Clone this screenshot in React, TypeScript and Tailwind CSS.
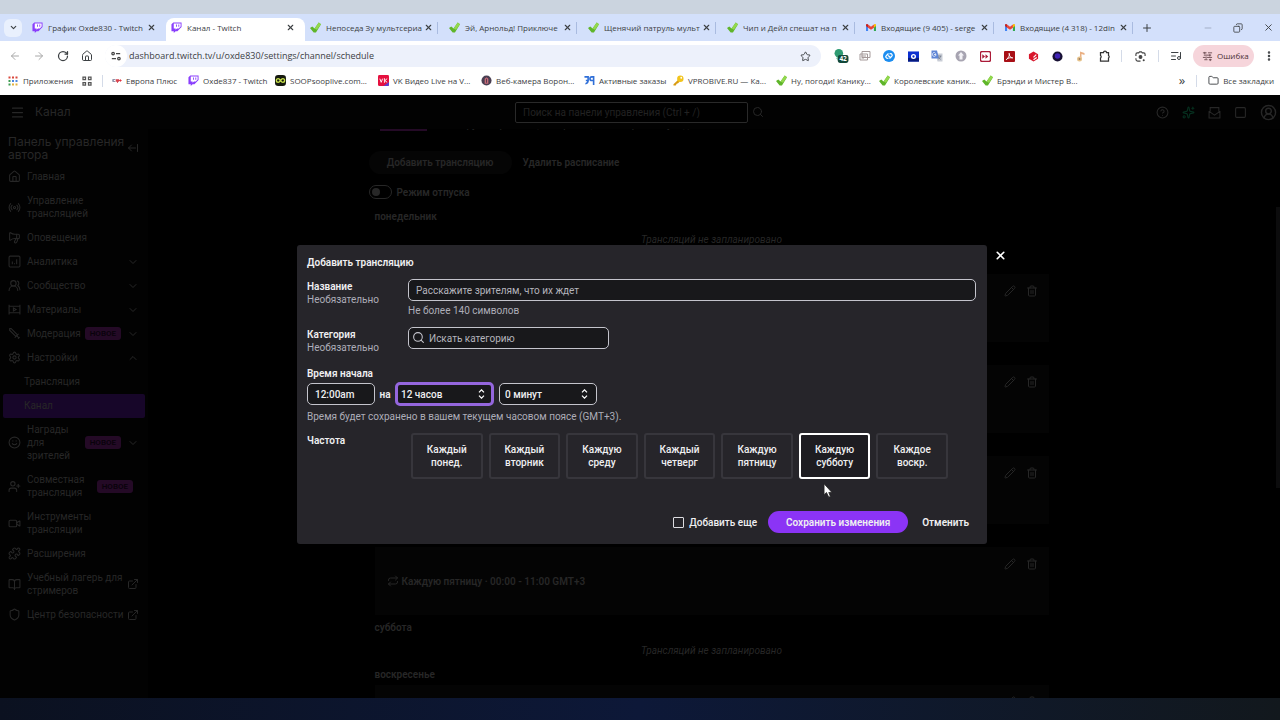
import type { ReactNode } from 'react';
import {
  ArrowLeft, ArrowLeftFromLine, ArrowRight, BookOpen, ChevronDown, ChevronUp, CircleHelp,
  CircleUserRound, Copy, EllipsisVertical, ExternalLink, Folder, House, ListMusic, Megaphone, Menu, Minus, Pencil,
  Plus, Puzzle, Radio, Repeat, RotateCw, Search, Settings, Shield, Smile, Sparkles, Square,
  Star, Sword, Trash2, UserPlus, UsersRound, Video, X,
} from 'lucide-react';

const TwitchIcon = () => (
  <svg viewBox="0 0 24 24" className="size-[11px] shrink-0">
    <path d="M5 1 1 5v15h5v4l4-4h4l9-9V1z" fill="#8a3ffc" />
    <path d="M6 3h15v7l-4 4h-4l-3 3v-3H6z" fill="#fff" />
    <path d="M11 5.5h2v5h-2zM16 5.5h2v5h-2z" fill="#8a3ffc" />
  </svg>
);

const CheckIcon = () => (
  <svg viewBox="0 0 24 24" className="size-[11px] shrink-0">
    <path d="M0 13l5-3 5 4L19 1l5 4-11 18H8z" fill="#5fb52a" />
    <path d="M10 14 19 1l5 4-9 12z" fill="#93d84e" />
  </svg>
);

const GmailIcon = () => (
  <svg viewBox="0 0 24 18" className="w-[10px] shrink-0">
    <path d="M0 2v16h5V8z" fill="#4285f4" />
    <path d="M24 2v16h-5V8z" fill="#34a853" />
    <path d="M5 1v8l7 5 7-5V1l-7 5.500z" fill="#ea4335" />
    <path d="M0 2c0-2 3-3 5-1v8L0 5z" fill="#c5221f" />
    <path d="M24 2c0-2-3-3-5-1v8l5-4z" fill="#fbbc04" />
  </svg>
);

const AppsIcon = () => (
  <svg viewBox="0 0 20 20" className="size-[10px] shrink-0">
    <path d="M1 1h4v4H1zM8 1h4v4H8zM15 1h4v4h-4z" fill="#d9493d" />
    <path d="M1 8h4v4H1zM1 15h4v4H1z" fill="#3f9d52" />
    <path d="M8 8h4v4H8zM15 8h4v4h-4z" fill="#4a86e0" />
    <path d="M8 15h4v4H8zM15 15h4v4h-4z" fill="#e3b23c" />
  </svg>
);

const GridIcon = () => (
  <svg viewBox="0 0 20 20" className="size-[10px] shrink-0" fill="none" stroke="#555" strokeWidth="2.500">
    <path d="M2 2h5v5H2zM13 2h5v5h-5zM2 13h5v5H2zM13 13h5v5h-5z" />
  </svg>
);

const EuropaIcon = () => (
  <svg viewBox="0 0 24 12" className="w-[10px] shrink-0">
    <path d="M1 3h7v2H4v2h4v2H1z" fill="#6d7391" />
    <path d="M9 3h8v6h-3v3h-2V9H9z" fill="#d5424d" />
    <path d="M17 5h2V3h2v2h2v2h-2v2h-2V7h-2z" fill="#e2333f" />
  </svg>
);

const SoopIcon = () => (
  <svg viewBox="0 0 24 24" className="size-[11px] shrink-0">
    <rect width="24" height="24" rx="7" fill="#15190f" />
    <path d="M12 12c-2-3-3-4-5-4a4 4 0 0 0 0 8c2 0 3-1 5-4s3-4 5-4a4 4 0 0 1 0 8c-2 0-3-1-5-4z" fill="none" stroke="#c6e04a" strokeWidth="3" />
  </svg>
);

const VkIcon = () => (
  <svg viewBox="0 0 24 24" className="size-[11px] shrink-0">
    <rect width="24" height="24" rx="3" fill="#e5103f" />
    <path d="M12 24h9a3 3 0 0 0 3-3v-6z" fill="#5b3fd0" />
    <path d="M4 8l3 8 3-8M14 7v10M20 8l-5 4 5 4" fill="none" stroke="#fff" strokeWidth="2" />
  </svg>
);

const CamIcon = () => (
  <svg viewBox="0 0 24 24" className="size-[11px] shrink-0">
    <circle cx="12" cy="12" r="11" fill="#493f52" />
    <path d="M8 19V8l4-3 4 3v11z" fill="#c76a78" />
    <path d="M11 8h2v9h-2z" fill="#4d3a4c" />
  </svg>
);

const OrdersIcon = () => (
  <svg viewBox="0 0 24 24" className="size-[11px] shrink-0" fill="none" stroke="#2f6fd8" strokeWidth="3.500">
    <path d="M1 4h8v8H4M9 10c0 6-1 9-6 9M21 22V4h-4a4 4 0 0 0 0 8h4" />
  </svg>
);

const KeyIcon = () => (
  <svg viewBox="0 0 24 24" className="size-[11px] shrink-0">
    <path d="M12 10 1 20v3h5l2-4 3-1 4-4z" fill="#d99b13" />
    <circle cx="16" cy="8" r="7" fill="#f2c41d" />
    <circle cx="18" cy="6" r="2" fill="#fff" />
  </svg>
);

const tabs = [
  { icon: <TwitchIcon />, title: 'График Oxde830 - Twitch' },
  { icon: <TwitchIcon />, title: 'Канал - Twitch', active: true },
  { icon: <CheckIcon />, title: 'Непоседа Зу мультсериа' },
  { icon: <CheckIcon />, title: 'Эй, Арнольд! Приключе' },
  { icon: <CheckIcon />, title: 'Щенячий патруль мульт' },
  { icon: <CheckIcon />, title: 'Чип и Дейл спешат на п' },
  { icon: <GmailIcon />, title: 'Входящие (9 405) - serge' },
  { icon: <GmailIcon />, title: 'Входящие (4 318) - 12din' },
];

const bookmarks = [
  { icon: <EuropaIcon />, title: 'Европа Плюс', width: 'w-[76px]' },
  { icon: <TwitchIcon />, title: 'Oxde837 - Twitch', width: 'w-[87px]' },
  { icon: <SoopIcon />, title: 'SOOPsooplive.com...', width: 'w-[103px]' },
  { icon: <VkIcon />, title: 'VK Видео Live на V...', width: 'w-[103px]' },
  { icon: <CamIcon />, title: 'Веб-камера Ворон...', width: 'w-[103px]' },
  { icon: <OrdersIcon />, title: 'Активные заказы', width: 'w-[89px]' },
  { icon: <KeyIcon />, title: 'VPROBIVE.RU — Ка...', width: 'w-[103px]' },
  { icon: <CheckIcon />, title: 'Ну, погоди! Канику...', width: 'w-[103px]' },
  { icon: <CheckIcon />, title: 'Королевские каник...', width: 'w-[103px]' },
  { icon: <CheckIcon />, title: 'Брэнди и Мистер В...', width: 'w-[103px]' },
];

const extensions = [
  <svg key="counter" viewBox="0 0 28 28" className="size-[15px]">
    <circle cx="9" cy="8" r="8" fill="#2e9b72" />
    <path d="M5 16l8 8" stroke="#8ad3b4" strokeWidth="4" />
    <rect x="7" y="11" width="20" height="15" rx="4" fill="#12483a" />
    <text x="17" y="23" fontSize="12" fontWeight="700" fill="#fff" textAnchor="middle" fontFamily="Open Sans, sans-serif">42</text>
  </svg>,
  <svg key="cards" viewBox="0 0 24 24" className="size-[12px]" fill="#fff" stroke="#a59a9a" strokeWidth="2">
    <path d="M6 3h16v12H6zM2 8h15v12H2z" />
    <path d="M5 12h9M5 16h5" />
  </svg>,
  <svg key="shazam" viewBox="0 0 24 24" className="size-[12px]">
    <circle cx="12" cy="12" r="12" fill="#1b8df0" />
    <path d="M11 16c-5 2-7-3-4-5l4-4M13 8c5-2 7 3 4 5l-4 4M10 11l4 3" fill="none" stroke="#fff" strokeWidth="2.500" />
  </svg>,
  <svg key="shot" viewBox="0 0 24 24" className="size-[11px]">
    <path d="M0 1h24v22H0z" fill="#0b2fd0" />
    <path d="M0 15h24v8H0z" fill="#061a7d" />
    <circle cx="12" cy="12" r="4" fill="none" stroke="#fff" strokeWidth="3" />
  </svg>,
  <svg key="translate" viewBox="0 0 24 24" className="size-[12px]">
    <path d="M9 7h14v16H13z" fill="#c9cdd6" />
    <path d="M1 1h11l4 16H1z" fill="#5f86d6" />
    <path d="M10 9H6m4 0c0 5-7 5-7 0s5-5 6-2" fill="none" stroke="#fff" strokeWidth="1.500" />
    <path d="M14 12h7m-2 0c0 3-2 5-4 6m0-4 4 5" fill="none" stroke="#6c7587" strokeWidth="1.500" />
  </svg>,
  <svg key="upload" viewBox="0 0 24 24" className="size-[12px]">
    <circle cx="12" cy="12" r="11" fill="#a7a4b1" />
    <path d="M12 4l6 7h-3v8H9v-8H6z" fill="#f3f2f6" />
  </svg>,
  <svg key="player" viewBox="0 0 24 24" className="size-[11px]">
    <rect x="1" y="1" width="22" height="22" rx="4" fill="#fff" stroke="#ab1b38" strokeWidth="3" />
    <path d="M5 7l6 5-6 5zM12 7l6 5-6 5z" fill="#ab1b38" />
  </svg>,
  <svg key="pdf" viewBox="0 0 24 24" className="size-[11px]">
    <rect width="24" height="24" rx="2" fill="#a80f16" />
    <path d="M11 5c3 1-1 10-6 14 3-4 9-5 14-4-4 0-8-4-8-10z" fill="none" stroke="#fff" strokeWidth="2" />
  </svg>,
  <svg key="red" viewBox="0 0 24 24" className="size-[11px]">
    <path d="M12 1l10 6v10l-10 6-10-6V7z" fill="#d8172c" />
    <path d="M12 14l6-6M12 19l7-5" stroke="#fff" strokeWidth="2.500" />
  </svg>,
  <svg key="moon" viewBox="0 0 24 24" className="size-[11px]">
    <circle cx="12" cy="12" r="11" fill="#171033" />
    <circle cx="12" cy="11" r="6" fill="#4023b5" />
  </svg>,
  <svg key="note" viewBox="0 0 24 24" className="size-[12px]">
    <path d="M10 17V3l9 3v4l-6-2v10" fill="#eab083" />
    <circle cx="9" cy="18" r="5" fill="#e6c38c" />
    <circle cx="9" cy="18" r="2" fill="#9d7f63" />
  </svg>,
  <svg key="puzzle" viewBox="0 0 24 24" className="size-[12px]" fill="none" stroke="#333" strokeWidth="2.500">
    <path d="M3 5h6a3 3 0 0 1 6 0h4v6a3 3 0 0 1 0 5v6H3v-6a3 3 0 0 0 0-5z" />
  </svg>,
];

function BrowserChrome() {
  return (
    <header className="shrink-0 bg-white font-['Open_Sans',sans-serif] text-[#3c4043]">
      <div className="h-[14px] bg-[#cbd4df]" />
      <div className="flex h-[27px] items-stretch bg-[#d3e0fb] text-[8px]">
        <div className="flex w-[27px] shrink-0 items-center pl-1">
          <button aria-label="Поиск вкладок" className="flex size-[18px] items-center justify-center rounded-md bg-[#e9f0fd]">
            <ChevronDown className="size-[9px]" strokeWidth={3} />
          </button>
        </div>
        {tabs.map((tab, i) => (
          <div
            key={tab.title}
            className={
              tab.active
                ? 'mt-1 flex w-[139px] items-center rounded-t-lg bg-white pb-1 pl-[5px] pr-[6px]'
                : 'mt-1 flex w-[139px] items-center pb-1 pl-[5px] pr-[6px]'
            }
          >
            {tab.icon}
            <span className="ml-[5px] whitespace-nowrap">{tab.title}</span>
            <button aria-label="Закрыть вкладку" className="ml-auto mr-1">
              <X className="size-[9px]" strokeWidth={3} />
            </button>
            {i > 1 && <span className="h-3 w-px shrink-0 bg-[#a9bbe0]" />}
          </div>
        ))}
        <button aria-label="Новая вкладка" className="ml-[2px]"><Plus className="size-3" /></button>
        <div className="ml-auto flex items-center gap-5 pr-[6px]">
          <button aria-label="Свернуть" className="text-[#9aa5bc]"><Minus className="size-[10px]" /></button>
          <button aria-label="Развернуть"><Copy className="size-[10px] -scale-x-100" /></button>
          <button aria-label="Закрыть"><X className="size-[11px]" /></button>
        </div>
      </div>

      <div className="flex h-[30px] items-center">
        <div className="flex w-[105px] shrink-0 items-center gap-3 pl-[9px]">
          <button aria-label="Назад"><ArrowLeft className="size-3 text-[#a8a8a8]" /></button>
          <button aria-label="Вперёд"><ArrowRight className="size-3 text-[#a8a8a8]" /></button>
          <button aria-label="Обновить"><RotateCw className="size-3" strokeWidth={2.5} /></button>
          <button aria-label="Домой"><House className="size-3" /></button>
        </div>
        <div className="flex h-[22px] grow items-center rounded-full bg-[#edf1fb] pr-[10px]">
          <span className="flex size-[22px] shrink-0 items-center justify-center rounded-full bg-white">
            <svg viewBox="0 0 24 24" className="size-[10px]" fill="none" stroke="#444" strokeWidth="3">
              <circle cx="5" cy="6" r="3" /><path d="M12 6h10M2 18h10" /><circle cx="19" cy="18" r="3" />
            </svg>
          </span>
          <input
            aria-label="Адресная строка"
            defaultValue="dashboard.twitch.tv/u/oxde830/settings/channel/schedule"
            className="ml-[2px] grow bg-transparent text-[9px] outline-none"
          />
          <Star className="size-[11px]" />
        </div>
        <div className="flex shrink-0 items-center pl-2">
          {extensions.map((ext) => (
            <button key={ext.key} className="flex w-6 justify-center" aria-label={`Расширение ${ext.key}`}>{ext}</button>
          ))}
          <span className="ml-[4px] h-3 w-px bg-[#d4dbe8]" />
          <button aria-label="Объектив" className="flex w-[36px] justify-center">
            <svg viewBox="0 0 24 24" className="size-[11px]" fill="none" stroke="#444" strokeWidth="2.500">
              <path d="M2 11V7a3 3 0 0 1 3-3h3l2-2h4l2 2h3a3 3 0 0 1 3 3v4M2 16v2a4 4 0 0 0 4 4h6" />
              <circle cx="12" cy="13" r="3" fill="#444" />
              <circle cx="19" cy="20" r="1" fill="#444" />
            </svg>
          </button>
          <span className="h-3 w-px bg-[#d4dbe8]" />
          <button aria-label="Медиа" className="flex w-[34px] justify-center"><ListMusic className="size-3" /></button>
          <button className="flex h-[22px] w-[61px] items-center gap-1 rounded-full bg-[#f6d5db] pl-[9px] text-[8px] text-[#4b3135]">
            <svg viewBox="0 0 24 24" className="size-[11px] shrink-0" fill="none" stroke="#6a4a50" strokeWidth="2">
              <path d="M2 4h8M13 4h9M4 9h16M2 14h6M11 14h11M5 19h7M15 19h6M6 2v5M17 7v5M9 12v5M18 17v5" />
            </svg>
            Ошибка
          </button>
          <button aria-label="Меню" className="flex w-[26px] justify-center pl-1"><EllipsisVertical className="size-3" strokeWidth={3} /></button>
        </div>
      </div>

      <nav className="flex h-6 items-center whitespace-nowrap pb-[5px] text-[8px]">
        <a href="#apps" className="flex w-[74px] shrink-0 items-center gap-[5px] pl-2"><AppsIcon />Приложения</a>
        <a href="#groups" aria-label="Группы вкладок" className="ml-2"><GridIcon /></a>
        <span className="ml-[10px] mr-[9px] h-3 w-px bg-[#d4dbe8]" />
        {bookmarks.map((b) => (
          <a key={b.title} href="#bookmark" className={`flex shrink-0 items-center gap-1 ${b.width}`}>
            {b.icon}
            {b.title}
          </a>
        ))}
        <button aria-label="Другие закладки" className="ml-auto text-[13px] leading-none">»</button>
        <span className="mx-[11px] h-3 w-px bg-[#d4dbe8]" />
        <a href="#all" className="flex items-center gap-1 pr-[6px]"><Folder className="size-[11px]" />Все закладки</a>
      </nav>
    </header>
  );
}

type NavItem = { icon?: ReactNode; label: string; badge?: boolean; end?: 'down' | 'up' | 'link'; active?: boolean };

const AnalyticsIcon = () => (
  <svg viewBox="0 0 24 24" fill="none" stroke="currentColor" strokeWidth="2">
    <rect x="2" y="2" width="20" height="20" rx="2" />
    <path d="M8 17v-5M12 17v-2M16 17V8" />
  </svg>
);

const ContentIcon = () => (
  <svg viewBox="0 0 24 24" fill="none" stroke="currentColor" strokeWidth="2">
    <path d="M2 3v18M22 3v18M2 6h20M2 18h20M10 9v6l5-3z" />
  </svg>
);

const navItems: NavItem[] = [
  { icon: <House />, label: 'Главная' },
  { icon: <Radio />, label: 'Управление\nтрансляцией' },
  { icon: <Megaphone className="-scale-x-100" />, label: 'Оповещения' },
  { icon: <AnalyticsIcon />, label: 'Аналитика', end: 'down' },
  { icon: <UsersRound />, label: 'Сообщество', end: 'down' },
  { icon: <ContentIcon />, label: 'Материалы', end: 'down' },
  { icon: <Sword className="-scale-x-100" />, label: 'Модерация', badge: true, end: 'down' },
  { icon: <Settings />, label: 'Настройки', end: 'up' },
  { label: 'Трансляция' },
  { label: 'Канал', active: true },
  { icon: <Smile />, label: 'Награды\nдля\nзрителей', badge: true, end: 'down' },
  { icon: <UserPlus />, label: 'Совместная\nтрансляция', badge: true },
  { icon: <Video />, label: 'Инструменты\nтрансляции' },
  { icon: <Puzzle />, label: 'Расширения' },
  { icon: <BookOpen />, label: 'Учебный лагерь для\nстримеров', end: 'link' },
  { icon: <Shield />, label: 'Центр безопасности', end: 'link' },
];

function Sidebar() {
  return (
    <aside className="w-[148px] shrink-0 bg-[#020202]">
      <div className="flex items-center justify-between pb-1 pl-2 pr-[9px] pt-[6px]">
        <h2 className="whitespace-nowrap font-['Inter',sans-serif] text-[12px] leading-[13px]">Панель управления<br />автора</h2>
        <button aria-label="Свернуть панель"><ArrowLeftFromLine className="size-3" /></button>
      </div>
      <nav className="text-[10px] leading-[13px]">
        {navItems.map((item) => (
          <a
            key={item.label}
            href="#nav"
            className={
              item.active
                ? 'mx-[3px] flex items-center rounded-xs bg-[#170629] pb-[6px] pl-[21px] pr-2 pt-[5px]'
                : 'flex items-center pb-[6px] pl-2 pr-[9px] pt-[5px]'
            }
          >
            {item.icon ? (
              <span className="mr-[6px] shrink-0 [&>svg]:size-[13px]">{item.icon}</span>
            ) : (
              !item.active && <span className="w-4" />
            )}
            <span className="whitespace-pre">{item.label}</span>
            <span className="ml-auto flex items-center gap-[6px]">
              {item.badge && (
                <span className={`rounded-[3px] bg-[#240a26] px-[5px] text-[8px] font-semibold text-[#09020b] ${item.end ? '' : 'mr-[6px]'}`}>
                  НОВОЕ
                </span>
              )}
              {item.end === 'down' && <ChevronDown className="size-3" />}
              {item.end === 'up' && <ChevronUp className="size-3" />}
              {item.end === 'link' && <ExternalLink className="size-3" />}
            </span>
          </a>
        ))}
      </nav>
    </aside>
  );
}

const days = [
  { id: 'mon', label: 'понедельник' },
  { id: 'tue', planned: true },
  { id: 'wed', planned: true },
  { id: 'thu', planned: true },
  { id: 'fri', planned: true, slot: 'Каждую пятницу · 00:00 - 11:00 GMT+3' },
  { id: 'sat', label: 'суббота' },
  { id: 'sun', label: 'воскресенье', planned: true },
];

function Schedule() {
  return (
    <main className="flex grow justify-center overflow-hidden bg-black pr-[11px]">
      <div className="w-[684px] shrink-0">
        <div className="flex h-[2px] items-end overflow-hidden pl-[15px] text-[10px] leading-[13px]">
          <span className="mr-[10px] h-[2px] w-[47px] shrink-0 bg-[#240a26]" />
          <span className="whitespace-nowrap">Планируйте трансляции заранее, чтобы зрители увидели их в своём часовом поясе</span>
        </div>
        <div className="mt-5 flex items-center pl-1 text-[10px] font-semibold">
          <button className="h-[23px] w-[143px] rounded-full bg-[#050505]">Добавить трансляцию</button>
          <button className="ml-[11px]">Удалить расписание</button>
        </div>
        <label className="mt-[11px] flex h-[14px] items-center gap-[5px] pl-1 text-[10px] font-semibold">
          <input type="checkbox" className="peer sr-only" />
          <span className="flex h-[14px] w-[23px] items-center rounded-full border border-current pl-[2px]">
            <span className="size-2 rounded-full bg-current" />
          </span>
          Режим отпуска
        </label>
        <div className="pl-[10px] pt-[5px] text-[10px]">
          {days.map((d) => (
            <section key={d.id}>
              <h3 className="h-[23px] font-semibold leading-[25px]">{d.label}</h3>
              {d.planned ? (
                <div className="flex h-[68px] items-center bg-[#040404] pl-3 pr-[11px] font-semibold">
                  {d.slot && <Repeat className="mr-[3px] size-3" />}
                  {d.slot}
                  <div className="ml-auto flex gap-[10px] self-start pt-[11px]">
                    <button aria-label="Изменить"><Pencil className="size-3" /></button>
                    <button aria-label="Удалить"><Trash2 className="size-3" /></button>
                  </div>
                </div>
              ) : (
                <p className="h-6 text-center italic leading-[26px]">Трансляций не запланировано</p>
              )}
            </section>
          ))}
        </div>
      </div>
    </main>
  );
}

const SelectArrows = () => (
  <svg viewBox="0 0 16 24" className="pointer-events-none absolute right-[9px] top-1/2 h-[10px] w-[7px] -translate-y-1/2" fill="none" stroke="#fff" strokeWidth="3">
    <path d="M2 8l6-6 6 6M2 16l6 6 6-6" />
  </svg>
);

const frequency = [
  ['Каждый', 'понед.'],
  ['Каждый', 'вторник'],
  ['Каждую', 'среду'],
  ['Каждый', 'четверг'],
  ['Каждую', 'пятницу'],
  ['Каждую', 'субботу'],
  ['Каждое', 'воскр.'],
];

function AddStreamDialog() {
  return (
    <div role="dialog" aria-label="Добавить трансляцию" className="relative w-[690px] rounded-[3px] bg-[#26252a] pb-[11px] pl-[10px] pr-[11px] pt-[11px] text-[10px] leading-[13px] text-[#efeff1]">
      <h1 className="font-semibold">Добавить трансляцию</h1>

      <div className="mt-[10px] flex">
        <div className="w-[101px] shrink-0 pt-px">
          <label htmlFor="title" className="block font-semibold">Название</label>
          <span className="text-[#adadb8]">Необязательно</span>
        </div>
        <div className="grow">
          <input
            id="title"
            placeholder="Расскажите зрителям, что их ждет"
            className="block h-[22px] w-full rounded-[5px] border border-[#c4c4cc] bg-[#18181b] px-[7px] placeholder:text-[#b4b4bc]"
          />
          <p className="mt-[3px] text-[#adadb8]">Не более 140 символов</p>
        </div>
      </div>

      <div className="mt-[10px] flex">
        <div className="w-[101px] shrink-0 pt-px">
          <label htmlFor="category" className="block font-semibold">Категория</label>
          <span className="text-[#adadb8]">Необязательно</span>
        </div>
        <div className="relative w-[201px]">
          <Search className="absolute left-1 top-1 size-[13px] text-[#c4c4cc]" />
          <input
            id="category"
            placeholder="Искать категорию"
            className="block h-[22px] w-full rounded-[5px] border border-[#c4c4cc] bg-[#18181b] pl-5 placeholder:text-[#b4b4bc]"
          />
        </div>
      </div>

      <label htmlFor="start" className="mt-[13px] block font-semibold">Время начала</label>
      <div className="mt-[2px] flex h-6 items-center font-medium">
        <input id="start" defaultValue="12:00am" className="h-[22px] w-[68px] rounded-[5px] border border-[#c4c4cc] bg-[#18181b] px-[7px]" />
        <span className="w-5 text-center font-semibold">на</span>
        <div className="relative w-[99px]">
          <select aria-label="Часы" className="block h-6 w-full appearance-none rounded-[5px] border-[3px] border-[#9466dd] bg-[#18181b] pl-[3px] outline-none">
            <option>12 часов</option>
          </select>
          <SelectArrows />
        </div>
        <div className="relative ml-[5px] w-[98px]">
          <select aria-label="Минуты" className="block h-[22px] w-full appearance-none rounded-[5px] border border-[#c4c4cc] bg-[#18181b] pl-[5px] outline-none">
            <option>0 минут</option>
          </select>
          <SelectArrows />
        </div>
      </div>
      <p className="mt-1 text-[#adadb8]">Время будет сохранено в вашем текущем часовом поясе (GMT+3).</p>

      <div className="mt-[10px] flex">
        <span className="w-[104px] shrink-0 pt-px font-semibold">Частота</span>
        <div className="grid w-[537px] grid-cols-7 gap-[6px]">
          {frequency.map(([every, day]) => (
            <button
              key={day}
              className={
                day === 'субботу'
                  ? 'h-[46px] rounded-[3px] border-2 border-white bg-[#1d1c21] font-medium'
                  : 'h-[46px] rounded-[3px] border-2 border-[#37363c] font-medium'
              }
            >
              {every}<br />{day}
            </button>
          ))}
        </div>
      </div>

      <div className="mt-8 flex items-center justify-end pr-[7px]">
        <label className="flex items-center gap-[5px] font-medium">
          <input type="checkbox" className="size-[11px] appearance-none rounded-[1px] border border-[#dcdce0]" />
          Добавить еще
        </label>
        <button className="ml-[11px] h-[22px] w-[140px] rounded-full bg-[#8b34f5] font-semibold">Сохранить изменения</button>
        <button className="ml-[14px] font-semibold">Отменить</button>
      </div>

      <button aria-label="Закрыть" className="absolute left-full top-1 ml-[7px] text-white"><X className="size-[13px]" strokeWidth={3} /></button>
      <svg viewBox="0 0 12 19" className="absolute left-[526px] top-[238px] h-[15px] w-[10px]">
        <path d="M1 1v14l3-3 3 6 2-1-2-5h4z" fill="#fff" stroke="#222" strokeWidth="1" />
      </svg>
    </div>
  );
}

export default function App() {
  return (
    <div className="flex h-screen min-h-[720px] flex-col overflow-hidden bg-black">
      <BrowserChrome />
      <div className="relative flex min-h-0 grow flex-col overflow-hidden font-['Roboto',sans-serif] text-[#272727]">
        <div className="flex h-[34px] shrink-0 items-center bg-[#020202]">
          <div className="flex flex-1 items-center pl-[10px]">
            <button aria-label="Меню"><Menu className="size-[15px]" /></button>
            <span className="ml-[10px] font-['Inter',sans-serif] text-[12px]">Канал</span>
          </div>
          <div className="flex items-center gap-1">
            <input
              aria-label="Поиск"
              placeholder="Поиск на панели управления (Ctrl + /)"
              className="h-[21px] w-[233px] rounded-xs border border-[#292929] bg-black px-[7px] text-[10px] placeholder:text-[#222]"
            />
            <button aria-label="Искать" className="pr-2"><Search className="size-3" /></button>
          </div>
          <div className="flex flex-1 items-center justify-end gap-[13px] pr-[3px]">
            <button aria-label="Справка"><CircleHelp className="size-[13px]" /></button>
            <button aria-label="Новинки" className="text-[#06301f]"><Sparkles className="size-[13px]" /></button>
            <button aria-label="Сообщения">
              <svg viewBox="0 0 24 24" className="size-[13px]" fill="none" stroke="currentColor" strokeWidth="2">
                <path d="M2 9v13h20V9M4 10V3h16v7M2 10l10 7 10-7" />
              </svg>
            </button>
            <button aria-label="Чат"><Square className="size-[13px]" /></button>
            <button aria-label="Профиль"><CircleUserRound className="size-[17px]" /></button>
          </div>
        </div>
        <div className="flex min-h-0 grow">
          <Sidebar />
          <Schedule />
          <div className="w-1 shrink-0 bg-black pt-[78px]"><div className="h-[281px] bg-[#0c0c0d]" /></div>
        </div>
        <div className="absolute inset-0 flex items-start justify-center pl-1 pt-[150px]">
          <AddStreamDialog />
        </div>
      </div>
      <footer className="h-[22px] shrink-0 bg-linear-to-r from-[#0b1120] via-[#0d1838] to-[#12181d]" />
    </div>
  );
}
